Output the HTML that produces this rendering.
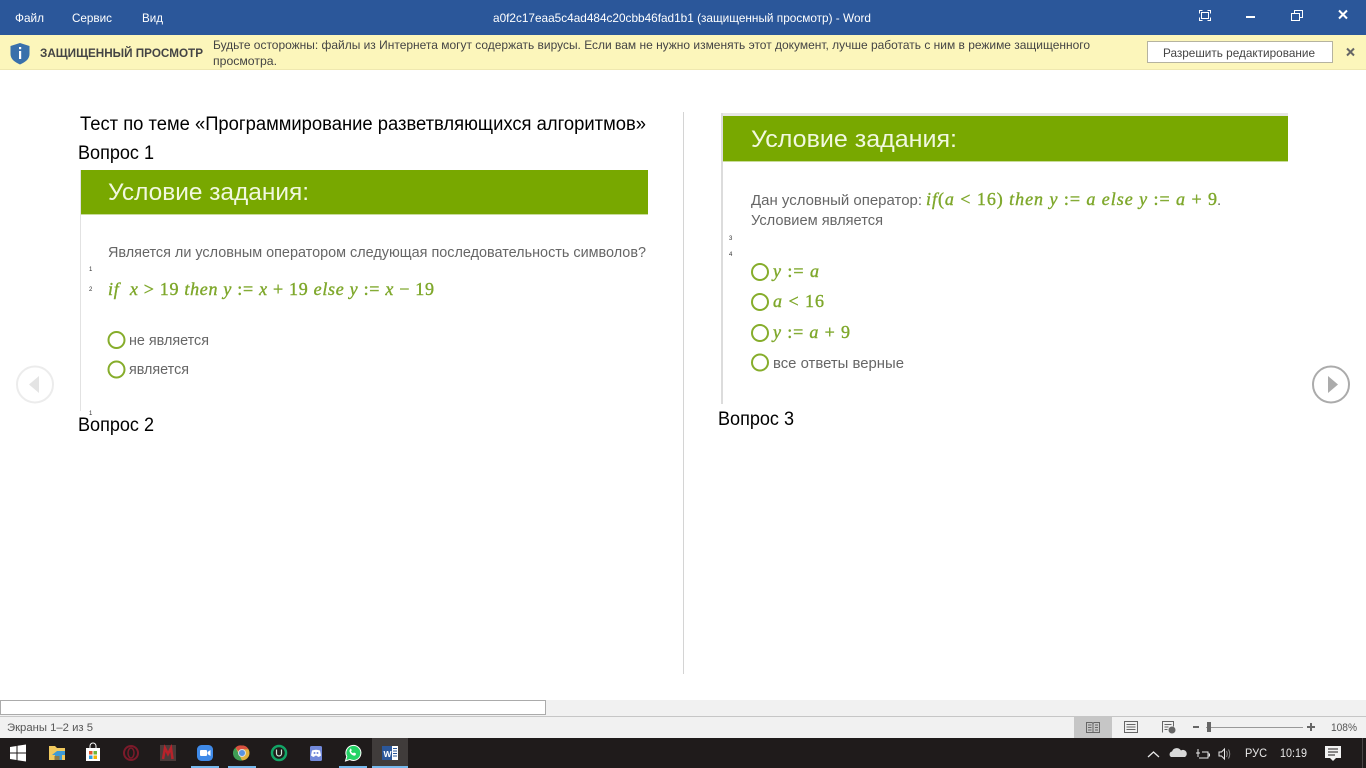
<!DOCTYPE html>
<html lang="ru">
<head>
<meta charset="utf-8">
<title>Word</title>
<style>
html,body{margin:0;padding:0;background:#fff;overflow:hidden}
svg{display:block;position:absolute;left:0;top:0}
text{font-family:"Liberation Sans","DejaVu Sans",sans-serif;white-space:pre}
.ui{fill:#fff;font-size:12px}
.y{fill:#444;font-size:12px}
.doc{fill:#000;font-size:19px}
.head{fill:#f1f8df;font-size:24px}
.q{fill:#666;font-size:15px}
.m{font-family:"Liberation Serif",serif;font-size:18px;fill:#7fa82c;stroke:#7fa82c;stroke-width:.4px}
.m .i{font-style:italic}
.s{fill:#555;font-size:11px}
.tiny{fill:#333;font-size:6px}
</style>
</head>
<body>
<svg width="1366" height="768" viewBox="0 0 1366 768" xmlns="http://www.w3.org/2000/svg">
<rect width="1366" height="768" fill="#fff"/>

<!-- title bar -->
<rect width="1366" height="35" fill="#2b579a"/>
<text class="ui" x="15" y="22" textLength="29" lengthAdjust="spacingAndGlyphs">Файл</text>
<text class="ui" x="72" y="22" textLength="40" lengthAdjust="spacingAndGlyphs">Сервис</text>
<text class="ui" x="142" y="22" textLength="21" lengthAdjust="spacingAndGlyphs">Вид</text>
<text class="ui" x="493" y="22" textLength="378" lengthAdjust="spacingAndGlyphs">a0f2c17eaa5c4ad484c20cbb46fad1b1 (защищенный просмотр) - Word</text>
<g fill="none" stroke="#fff" stroke-width="1">
<path d="M1199.500 13.500v-3h3M1207.500 10.500h3v3M1210.500 17.500v3h-3M1202.500 20.500h-3v-3"/>
<rect x="1201.500" y="12.500" width="7" height="6"/>
<rect x="1291.500" y="13.500" width="8" height="7"/>
<path d="M1294.500 13.500v-3h8v7h-3"/>
</g>
<rect x="1246" y="16" width="9" height="2" fill="#fff"/>
<path d="M1339 10.500l8 8M1347 10.500l-8 8" stroke="#fff" stroke-width="2" fill="none"/>

<!-- protected view bar -->
<rect y="35" width="1366" height="34" fill="#fcf6bb"/>
<rect y="69" width="1366" height="1" fill="#efe8b0"/>
<path d="M20 43l9.500 3v8c0 5-4 8-9.500 10.500C14.500 62 10.500 59 10.500 54v-8z" fill="#3a70ab"/>
<rect x="19" y="47" width="2.200" height="2.200" fill="#fff"/>
<rect x="19" y="51" width="2.200" height="8" fill="#fff"/>
<text x="40" y="57" font-size="12" font-weight="bold" fill="#444" textLength="163" lengthAdjust="spacingAndGlyphs">ЗАЩИЩЕННЫЙ ПРОСМОТР</text>
<text class="y" x="213" y="49" textLength="877" lengthAdjust="spacingAndGlyphs">Будьте осторожны: файлы из Интернета могут содержать вирусы. Если вам не нужно изменять этот документ, лучше работать с ним в режиме защищенного</text>
<text class="y" x="213" y="65" textLength="64" lengthAdjust="spacingAndGlyphs">просмотра.</text>
<rect x="1147.500" y="41.500" width="185" height="21" fill="#fff" stroke="#b5b3a0"/>
<text x="1163" y="57" font-size="12" fill="#444" textLength="152" lengthAdjust="spacingAndGlyphs">Разрешить редактирование</text>
<path d="M1347 48.500l7 7M1354 48.500l-7 7" stroke="#666" stroke-width="2" fill="none"/>

<!-- left column -->
<text class="doc" x="80" y="130" textLength="566" lengthAdjust="spacingAndGlyphs">Тест по теме «Программирование разветвляющихся алгоритмов»</text>
<text class="doc" x="78" y="159" textLength="76" lengthAdjust="spacingAndGlyphs">Вопрос 1</text>
<rect x="80" y="170" width="1" height="241" fill="#e2e2e2"/>
<rect x="81" y="170" width="567" height="44" fill="#78a800"/>
<rect x="81" y="214" width="567" height="1" fill="#c8dc9a"/>
<text class="head" x="108" y="200" textLength="201" lengthAdjust="spacingAndGlyphs">Условие задания:</text>
<text class="q" x="108" y="257" textLength="538" lengthAdjust="spacingAndGlyphs">Является ли условным оператором следующая последовательность символов?</text>
<text class="m" x="108" y="295" textLength="326" lengthAdjust="spacing"><tspan class="i">if  x</tspan> &gt; 19 <tspan class="i">then y</tspan> := <tspan class="i">x</tspan> + 19 <tspan class="i">else y</tspan> := <tspan class="i">x</tspan> − 19</text>
<g fill="none" stroke="#86ad2b" stroke-width="2">
<circle cx="116.500" cy="340" r="8"/>
<circle cx="116.500" cy="369.500" r="8"/>
</g>
<text class="q" x="129" y="345" textLength="80" lengthAdjust="spacingAndGlyphs">не является</text>
<text class="q" x="129" y="374" textLength="60" lengthAdjust="spacingAndGlyphs">является</text>
<text class="tiny" x="89" y="271">1</text>
<text class="tiny" x="89" y="291">2</text>
<text class="tiny" x="89" y="415">1</text>
<text class="doc" x="78" y="431" textLength="76" lengthAdjust="spacingAndGlyphs">Вопрос 2</text>

<!-- divider -->
<rect x="683" y="112" width="1" height="562" fill="#d4d4d4"/>

<!-- right column -->
<rect x="721" y="113" width="567" height="3" fill="#e6e6e6"/>
<rect x="721" y="113" width="2" height="291" fill="#dcdcdc"/>
<rect x="723" y="116" width="565" height="45" fill="#78a800"/>
<rect x="723" y="161" width="565" height="1" fill="#c8dc9a"/>
<text class="head" x="751" y="147" textLength="206" lengthAdjust="spacingAndGlyphs">Условие задания:</text>
<text class="q" x="751" y="205" textLength="171" lengthAdjust="spacingAndGlyphs">Дан условный оператор:</text>
<text class="m" x="926" y="205" textLength="291" lengthAdjust="spacing"><tspan class="i">if</tspan>(<tspan class="i">a</tspan> &lt; 16) <tspan class="i">then y</tspan> := <tspan class="i">a else y</tspan> := <tspan class="i">a</tspan> + 9</text>
<text class="q" x="1217" y="205">.</text>
<text class="q" x="751" y="225" textLength="132" lengthAdjust="spacingAndGlyphs">Условием является</text>
<text class="tiny" x="729" y="240">3</text>
<text class="tiny" x="729" y="256">4</text>
<g fill="none" stroke="#86ad2b" stroke-width="2">
<circle cx="760" cy="272" r="8"/>
<circle cx="760" cy="302" r="8"/>
<circle cx="760" cy="333" r="8"/>
<circle cx="760" cy="362.500" r="8"/>
</g>
<text class="m" x="773" y="277" textLength="46" lengthAdjust="spacing"><tspan class="i">y</tspan> := <tspan class="i">a</tspan></text>
<text class="m" x="773" y="307" textLength="51" lengthAdjust="spacing"><tspan class="i">a</tspan> &lt; 16</text>
<text class="m" x="773" y="338" textLength="77" lengthAdjust="spacing"><tspan class="i">y</tspan> := <tspan class="i">a</tspan> + 9</text>
<text class="q" x="773" y="368" textLength="131" lengthAdjust="spacingAndGlyphs">все ответы верные</text>
<text class="doc" x="718" y="425" textLength="76" lengthAdjust="spacingAndGlyphs">Вопрос 3</text>

<!-- page nav -->
<circle cx="35" cy="384.500" r="18" fill="none" stroke="#ececec" stroke-width="2"/>
<path d="M39 376v17l-10-8.500z" fill="#e4e4e4"/>
<circle cx="1331" cy="384.500" r="18" fill="none" stroke="#ababab" stroke-width="2"/>
<path d="M1328 376v17l10-8.500z" fill="#ababab"/>

<!-- bottom scroll area & status bar -->
<rect y="700" width="1366" height="38" fill="#f1f1f1"/>
<rect x=".5" y="700.500" width="545" height="14" fill="#fff" stroke="#ababab"/>
<rect y="716" width="1366" height="1" fill="#c6c6c6"/>
<text class="s" x="7" y="731" textLength="86" lengthAdjust="spacingAndGlyphs">Экраны 1–2 из 5</text>
<rect x="1074" y="717" width="38" height="21" fill="#c6c6c6"/>
<g fill="none" stroke="#666" stroke-width="1">
<path d="M1086.500 722.500h5.500l1 1 1-1h5.500v10h-13zM1093 723.500v9M1088 725h3.500M1088 727.500h3.500M1088 730h3.500M1095 725h3M1095 727.500h3M1095 730h3"/>
<path d="M1124.500 721.500h13v11h-13zM1126.500 724.500h9M1126.500 727h9M1126.500 729.500h9"/>
<path d="M1162.500 732.500v-11h11v5M1164.500 724.500h7M1164.500 727h4M1164.500 729.500h3"/>
</g>
<circle cx="1172" cy="730" r="3.500" fill="#666"/>
<rect x="1193" y="726" width="6" height="2" fill="#666"/>
<rect x="1206" y="727" width="97" height="1" fill="#999"/>
<rect x="1207" y="722" width="4" height="10" fill="#666"/>
<path d="M1307 727h8M1311 723v8" stroke="#666" stroke-width="2"/>
<text class="s" x="1331" y="731" textLength="26" lengthAdjust="spacingAndGlyphs">108%</text>

<!-- taskbar -->
<rect y="738" width="1366" height="30" fill="#1f1b1b"/>
<rect x="372" y="738" width="36" height="30" fill="#403c3b"/>
<rect x="191" y="766" width="28" height="2" fill="#76b9ed"/>
<rect x="228" y="766" width="28" height="2" fill="#76b9ed"/>
<rect x="339" y="766" width="28" height="2" fill="#76b9ed"/>
<rect x="372" y="766" width="36" height="2" fill="#76b9ed"/>
<path d="M10 747l6.500-1v6.500H10zM17.500 745.800l8.500-1.300v8H17.500zM10 753.500h6.500v6.500L10 759zM17.500 753.500H26v8l-8.500-1.300z" fill="#fff"/>
<!-- explorer -->
<path d="M49 746h6l2 2h8v12H49z" fill="#f0c95e"/>
<path d="M52 755l5-4 8 0v4h-3v5h-7v-5z" fill="#3d9ad6"/>
<rect x="54.500" y="756" width="5" height="4" fill="#8a7a4a"/>
<!-- store -->
<path d="M90 748v-2a3 3 0 0 1 6 0v2" fill="none" stroke="#fff"/>
<rect x="86" y="748" width="14" height="13" fill="#fff"/>
<rect x="89" y="751" width="3.500" height="3.500" fill="#e2582b"/><rect x="93.500" y="751" width="3.500" height="3.500" fill="#6fb53a"/>
<rect x="89" y="755.500" width="3.500" height="3.500" fill="#2d9ce0"/><rect x="93.500" y="755.500" width="3.500" height="3.500" fill="#f4b400"/>
<!-- opera -->
<circle cx="131" cy="753" r="7" fill="none" stroke="#7c1a2a" stroke-width="2"/>
<ellipse cx="131" cy="753" rx="3" ry="5" fill="none" stroke="#7c1a2a" stroke-width="1.500"/>
<!-- M -->
<rect x="160" y="745" width="16" height="16" fill="#4b3b3a"/>
<path d="M163 759l2-11 3 6 3-6 1.500 11" fill="none" stroke="#b8222a" stroke-width="2.500"/>
<!-- zoom -->
<rect x="197" y="745" width="16" height="16" rx="4.500" fill="#3f8ae8"/>
<rect x="200" y="750" width="7" height="6" rx="1" fill="#fff"/>
<path d="M207.500 752l3-2v6l-3-2z" fill="#fff"/>
<!-- chrome -->
<circle cx="242" cy="753" r="7.500" fill="#e2b33c"/>
<path d="M242 745.500a7.500 7.500 0 0 1 6.500 3.700H242a3.800 3.800 0 0 0-3.500 2.300l-3-4a7.500 7.500 0 0 1 6.500-2z" fill="#d9503f"/>
<path d="M235.500 747.500l3.300 6.500 3.200 6.500a7.500 7.500 0 0 1-6.500-13z" fill="#3f9e55"/>
<circle cx="242" cy="753" r="3.500" fill="#5a93e0" stroke="#ddd"/>
<!-- upwork -->
<circle cx="279" cy="753" r="7" fill="none" stroke="#12a566" stroke-width="2.500"/>
<path d="M276.500 749.500v4a2.500 2.500 0 0 0 5 0v-4" fill="none" stroke="#cfe8d8" stroke-width="1.200"/>
<!-- discord -->
<rect x="310" y="746" width="12" height="15" rx="1.500" fill="#7289da"/>
<path d="M312 750.500q4-1.500 8 0l1 5q-1.500 1.500-3 1.500l-1-1.300h-2l-1 1.300q-1.500 0-3-1.500z" fill="#fff"/>
<circle cx="314.500" cy="753" r="1" fill="#7289da"/><circle cx="317.500" cy="753" r="1" fill="#7289da"/>
<!-- whatsapp -->
<path d="M345.500 761l1.300-4.500a7.500 7.500 0 1 1 3 3z" fill="#25d366" stroke="#fff" stroke-width="1"/>
<path d="M350 749.500c-1 1-.5 3 1 4.500s3.500 2.200 4.700 1l.3-1.500-2-1-1 .8c-1-.4-1.600-1-2-2l.8-1-1-2z" fill="#fff"/>
<!-- word -->
<rect x="382" y="746" width="11" height="14" fill="#2b579a"/>
<rect x="392" y="746" width="6" height="14" fill="#fff"/>
<path d="M393 748.500h4M393 751h4M393 753.500h4M393 756h4" stroke="#2b579a"/>
<text x="383.500" y="757" font-size="8.500" font-weight="bold" fill="#fff">W</text>
<!-- tray -->
<path d="M1148 757l5.500-5 5.500 5" fill="none" stroke="#e8e8e8" stroke-width="1.300"/>
<path d="M1171 757a3 3 0 0 1 1-5.500 5 5 0 0 1 9-1 3.500 3.500 0 0 1 4 6.500z" fill="#d8d8d8"/>
<g fill="none" stroke="#e8e8e8" stroke-width="1">
<path d="M1196 753h4M1198 749v8M1199 758h9v-6h-6M1208 754h1.500v2H1208"/>
<path d="M1219 752h2.500l3-3v10l-3-3H1219z"/>
<path d="M1226.500 751q1.500 3 0 6M1228.500 749.500q2.500 4.500 0 9" stroke="#888"/>
</g>
<text x="1245" y="757" font-size="12" fill="#e8e8e8" textLength="22" lengthAdjust="spacingAndGlyphs">РУС</text>
<text x="1280" y="757" font-size="12" fill="#e8e8e8" textLength="27" lengthAdjust="spacingAndGlyphs">10:19</text>
<path d="M1325 746h16v12h-5l-3 3-3-3h-5z" fill="#f2f2f2"/>
<path d="M1328 749h10M1328 752h10M1328 755h7" stroke="#1f1b1b"/>
<rect x="1362" y="738" width="1" height="30" fill="#4a4646"/>
</svg>
</body>
</html>
